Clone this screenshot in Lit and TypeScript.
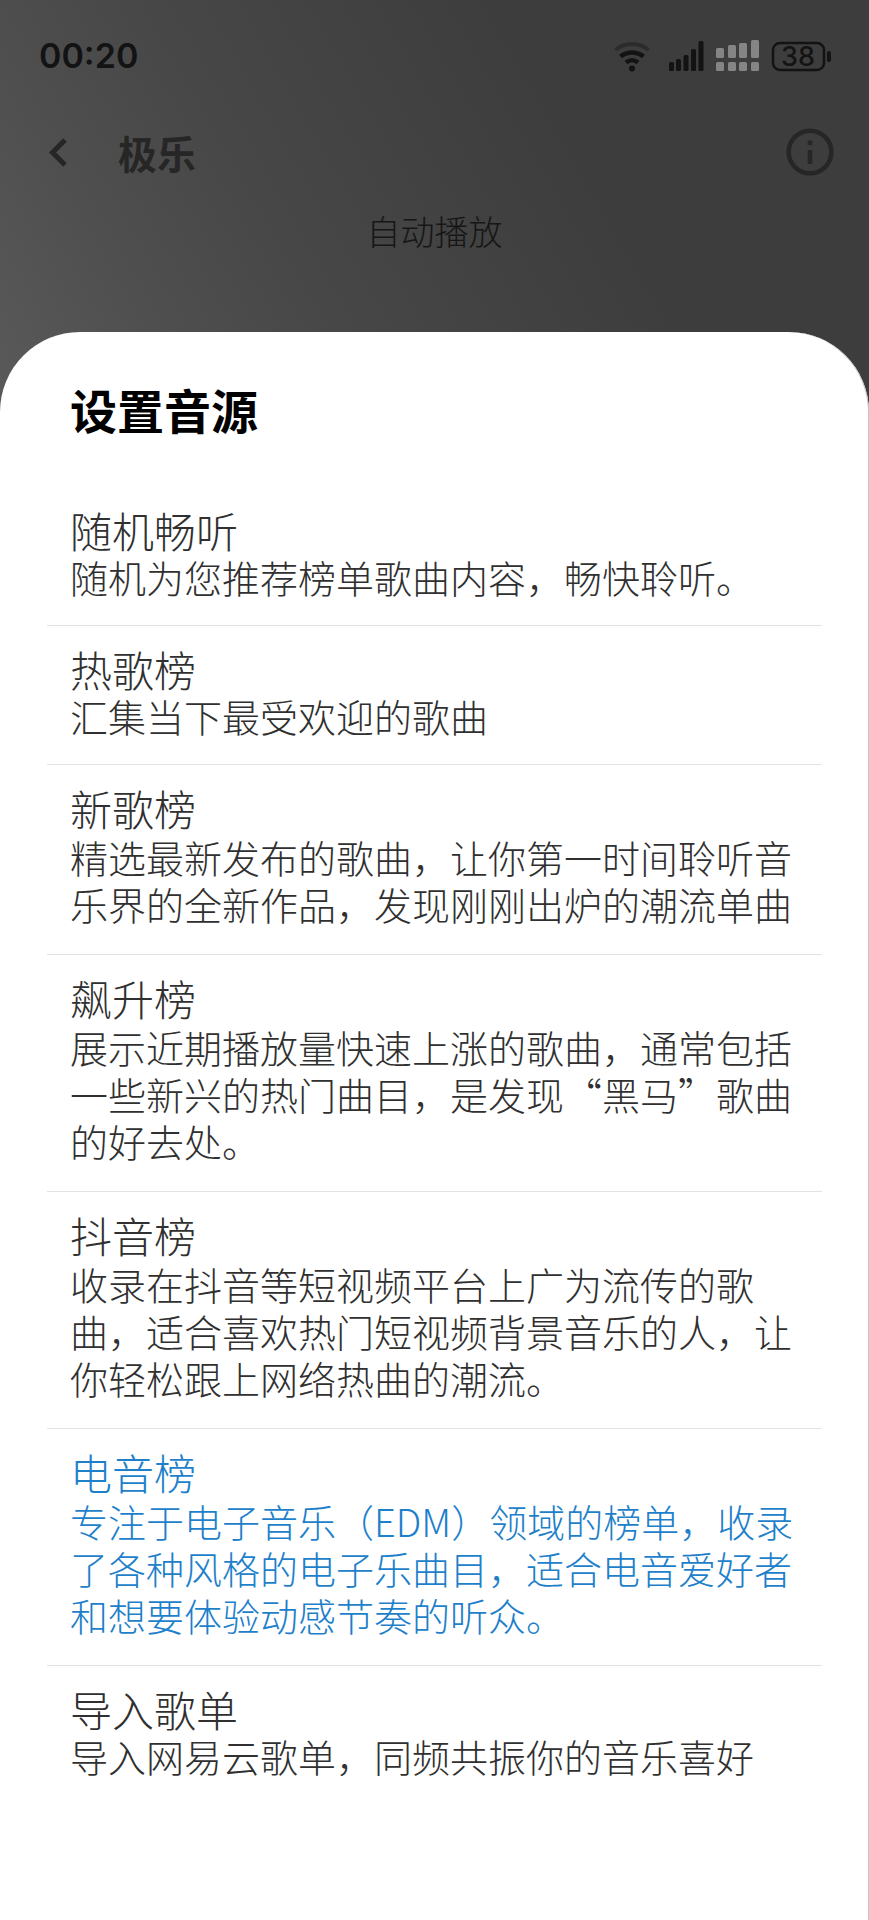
import { LitElement, css, html, svg } from "lit";
import { customElement, property, state } from "lit/decorators.js";
import { classMap } from "lit/directives/class-map.js";

interface Source {
  id: string;
  title: string;
  text: string;
  brief?: boolean;
}

const SOURCES: Source[] = [
  { id: "random", title: "随机畅听", text: "随机为您推荐榜单歌曲内容，畅快聆听。", brief: true },
  { id: "hot", title: "热歌榜", text: "汇集当下最受欢迎的歌曲", brief: true },
  { id: "new", title: "新歌榜", text: "精选最新发布的歌曲，让你第一时间聆听音乐界的全新作品，发现刚刚出炉的潮流单曲" },
  { id: "rising", title: "飙升榜", text: "展示近期播放量快速上涨的歌曲，通常包括一些新兴的热门曲目，是发现“黑马”歌曲的好去处。" },
  { id: "douyin", title: "抖音榜", text: "收录在抖音等短视频平台上广为流传的歌曲，适合喜欢热门短视频背景音乐的人，让你轻松跟上网络热曲的潮流。" },
  { id: "edm", title: "电音榜", text: "专注于电子音乐（EDM）领域的榜单，收录了各种风格的电子乐曲目，适合电音爱好者和想要体验动感节奏的听众。" },
  { id: "import", title: "导入歌单", text: "导入网易云歌单，同频共振你的音乐喜好", brief: true },
];

@customElement("status-bar")
class StatusBar extends LitElement {
  static styles = css`
    :host {
      display: flex;
      align-items: center;
      height: 112px;
      padding: 0 38px 0 39px;
      color: #131313;
      font-family: Inter, sans-serif;
    }
    .time {
      flex: 1;
      font-size: 34px;
      font-weight: 600;
      line-height: 44px;
    }
    .icons {
      display: flex;
      align-items: flex-end;
      gap: 12px;
    }
    svg {
      display: block;
    }
    .wifi {
      margin-right: 7px;
    }
    .level {
      font-size: 27px;
      font-weight: 500;
    }
  `;

  render() {
    return html`
      <time class="time">00:20</time>
      <div class="icons">
        <svg class="wifi" width="36" height="31" viewBox="0 0 36 31" fill="none" stroke-width="4" aria-hidden="true">
          <path d="M1.500 9 C11 1 25 1 34.500 9" stroke="#2c2c2c" />
          <path d="M6.500 15.500 C13 10 23 10 29.500 15.500" stroke="currentColor" stroke-width="4.500" />
          <path d="M12 21.500 C15.500 18.500 20.500 18.500 24 21.500" stroke="currentColor" stroke-width="4.500" />
          <circle cx="18" cy="27.500" r="3" fill="currentColor" />
        </svg>
        <svg width="35" height="31" viewBox="0 0 35 31" fill="currentColor" aria-hidden="true">
          ${[[0, 9], [7, 12], [14.5, 16], [22, 22], [29.5, 30]].map(
            ([x, h]) => svg`<rect x=${x} y=${30 - h} width="5" height=${h} rx="1.5" />`
          )}
        </svg>
        <svg width="43" height="32" viewBox="0 0 43 32" fill="#858585" aria-hidden="true">
          ${[[0, 10], [12, 13], [23, 15], [35, 18]].map(
            ([x, h]) => svg`
              <rect x=${x} y=${18 - h} width="8" height=${h} rx="1.5" />
              <rect x=${x} y="22" width="8" height="9" rx="1.5" />`
          )}
        </svg>
        <svg width="60" height="31" viewBox="0 0 60 31" role="img" aria-label="电量 38">
          <rect x="2" y="2" width="51" height="27" rx="7" fill="none" stroke="currentColor" stroke-width="2.5" />
          <rect x="56" y="10" width="4" height="11" rx="2" fill="currentColor" />
          <text class="level" x="27" y="25" text-anchor="middle" fill="currentColor">38</text>
        </svg>
      </div>
    `;
  }
}

@customElement("source-option")
class SourceOption extends LitElement {
  @property({ attribute: false }) source!: Source;
  @property({ type: Boolean }) selected = false;

  static styles = css`
    :host {
      display: block;
    }
    .option {
      display: block;
      width: 100%;
      margin: 0;
      padding: 18px 23px 27px;
      border: 0;
      background: none;
      color: #303030;
      font: inherit;
      text-align: left;
      cursor: pointer;
    }
    .selected {
      color: #1e7fca;
    }
    .title,
    .text {
      display: block;
    }
    .title {
      font-size: 42px;
      line-height: 50px;
    }
    .text {
      font-size: 38px;
      line-height: 47px;
    }
    .brief .text {
      line-height: 43px;
    }
  `;

  render() {
    const { title, text, brief = false } = this.source;
    return html`
      <button
        type="button"
        class=${classMap({ option: true, brief, selected: this.selected })}
        aria-pressed=${this.selected ? "true" : "false"}
      >
        <span class="title">${title}</span>
        <span class="text">${text}</span>
      </button>
    `;
  }
}

@customElement("app-root")
class AppRoot extends LitElement {
  @state() private current = "edm";

  static styles = css`
    :host {
      display: flex;
      flex-direction: column;
      min-height: 100vh;
      background: #3d3d3d
        linear-gradient(60deg, #5a5a5a 0, #4f4f4f 180px, #474747 340px, #3d3d3d 640px)
        top / 100% 420px no-repeat;
      color: #262626;
      font-family: "Noto Sans CJK SC", sans-serif;
      font-weight: 300;
    }
    .bar {
      display: flex;
      align-items: center;
      height: 80px;
      padding: 0 35px 0 40px;
    }
    .icon-button {
      display: block;
      padding: 0;
      border: 0;
      background: none;
      color: inherit;
      cursor: pointer;
    }
    .icon-button svg {
      display: block;
    }
    .name {
      flex: 1;
      margin: 0 0 0 42px;
      font-size: 39px;
      line-height: 48px;
      font-weight: 700;
    }
    .mode {
      margin: 0 0 62px;
      color: #161616;
      font-size: 34px;
      line-height: 78px;
      text-align: center;
    }
    .sheet {
      flex: 1;
      padding: 47px 47px 48px;
      border-radius: 80px 80px 0 0;
      background: #fff;
      box-shadow: inset -1px 0 0 #c4c4c4;
    }
    .heading {
      margin: 0 0 48px;
      padding: 0 23px;
      color: #000;
      font-size: 47px;
      line-height: 60px;
      font-weight: 700;
    }
    .list {
      margin: 0;
      padding: 0;
      list-style: none;
    }
    .item + .item {
      border-top: 1px solid #e2e2e2;
    }
  `;

  render() {
    return html`
      <status-bar></status-bar>
      <header class="bar">
        <button class="icon-button" type="button" aria-label="返回">
          <svg width="36" height="36" viewBox="0 0 36 36" fill="none" stroke="currentColor" stroke-width="5">
            <path d="M25 6 L12.500 18.500 L25 31" />
          </svg>
        </button>
        <h1 class="name">极乐</h1>
        <button class="icon-button" type="button" aria-label="信息">
          <svg width="48" height="48" viewBox="0 0 48 48" fill="none" stroke="currentColor" stroke-width="4.500">
            <circle cx="24" cy="24" r="21.300" />
            <path d="M24 12.500v4.500M24 22v14" />
          </svg>
        </button>
      </header>
      <p class="mode">自动播放</p>
      <section class="sheet" role="dialog" aria-labelledby="sheet-title" lang="zh-CN">
        <h2 class="heading" id="sheet-title">设置音源</h2>
        <ul class="list">
          ${SOURCES.map(
            (source) => html`
              <li class="item">
                <source-option
                  .source=${source}
                  ?selected=${source.id === this.current}
                  @click=${() => (this.current = source.id)}
                ></source-option>
              </li>
            `
          )}
        </ul>
      </section>
    `;
  }
}
